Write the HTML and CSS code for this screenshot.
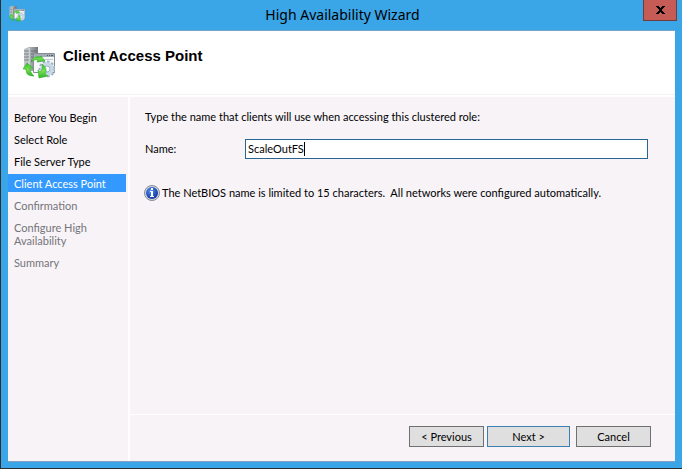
FILE: index.html
```html
<!DOCTYPE html>
<html lang="en">
<head>
<meta charset="utf-8">
<title>High Availability Wizard</title>
<link rel="stylesheet" href="styles.css">
</head>
<body>
<svg class="defs" aria-hidden="true">
  <defs>
    <linearGradient id="tower" x1="0" x2="1"><stop offset="0" stop-color="#c9cdd1"/><stop offset=".5" stop-color="#a4a9ad"/><stop offset="1" stop-color="#71777d"/></linearGradient>
    <linearGradient id="green" x1="0" y1="0" x2="0" y2="1"><stop offset="0" stop-color="#2fc42a"/><stop offset=".5" stop-color="#74e04f"/><stop offset="1" stop-color="#2eb32c"/></linearGradient>
    <radialGradient id="info" cx=".4" cy=".35" r=".7"><stop offset="0" stop-color="#5f97ea"/><stop offset=".6" stop-color="#2355c4"/><stop offset="1" stop-color="#12348f"/></radialGradient>
    <symbol id="cluster" viewBox="0 0 32 32">
      <path d="M1 2l5-2h9v24H6l-5-2z" fill="url(#tower)"/>
      <path d="M6 1v22" stroke="#eceeef"/>
      <path d="M1 4h5M1 7h5M1 10h5M1 13h5" stroke="#7c8287"/>
      <path d="M8 4h6M8 7h6M8 10h6M8 13h6" stroke="#6b7177"/>
      <path d="M10.500 6.500h21v19h-21z" fill="#f5f7f9" stroke="#858c94"/>
      <path d="M11 7h20v3H11z" fill="#a3abb4"/>
      <path d="M24 8.500h1M26 8.500h1M28 8.500h2" stroke="#4f5963"/>
      <path d="M12 12.500h18" stroke="#c5cbd1"/>
      <circle cx="24" cy="22" r="7" fill="none" stroke="#9fb3c6" stroke-width="3" stroke-dasharray="2.400 1.700"/>
      <circle cx="24" cy="22" r="5" fill="none" stroke="#c9d8e5" stroke-width="3.500"/>
      <circle cx="24" cy="22" r="3" fill="#f7fafc" stroke="#9bb0c4"/>
      <path d="M8 15c1-4 5-6 9-5l1-1 4 5-8 1 1-2c-3-1-4 0-7 2z" fill="url(#green)" stroke="#35a92e" stroke-width=".6"/>
      <path d="M0 22l4-6 6 5-3 0c0 3 1 5 4 8-6 0-8-2-8-7z" fill="url(#green)" stroke="#35a92e" stroke-width=".6"/>
      <path d="M19 17c4 3 5 6 3 10l3 2-9 2-1-8 2 2c2-2 3-4 2-8z" fill="url(#green)" stroke="#35a92e" stroke-width=".6"/>
    </symbol>
  </defs>
</svg>
<div class="window">
  <header class="titlebar">
    <svg class="app-icon" aria-hidden="true"><use href="#cluster"/></svg>
    <h1 class="title">High Availability Wizard</h1>
    <button class="close" type="button" aria-label="Close"><svg width="9" height="8" viewBox="0 0 9 8" aria-hidden="true"><path d="M0 0h3v1h1v1h1V1h1V0h3v1H8v1H7v1H6v2h1v1h1v1h1v1H6V7H5V6H4v1H3v1H0V7h1V6h1V5h1V3H2V2H1V1H0z" fill="#000"/></svg></button>
  </header>
  <div class="client">
    <div class="banner">
      <svg class="banner-icon" aria-hidden="true"><use href="#cluster"/></svg>
      <h2 class="heading">Client Access Point</h2>
    </div>
    <div class="body">
      <nav class="steps" aria-label="Steps">
        <ol>
          <li><a href="#before">Before You Begin</a></li>
          <li><a href="#role">Select Role</a></li>
          <li><a href="#type">File Server Type</a></li>
          <li class="current"><a href="#access" aria-current="step">Client Access Point</a></li>
          <li class="pending">Confirmation</li>
          <li class="pending">Configure High Availability</li>
          <li class="pending">Summary</li>
        </ol>
      </nav>
      <form class="page">
        <div class="content">
          <p class="intro">Type the name that clients will use when accessing this clustered role:</p>
          <div class="field">
            <label for="name">Name:</label>
            <div class="textbox"><input id="name" type="text" value="ScaleOutFS" maxlength="15" size="10"><span class="caret"></span></div>
          </div>
          <div class="note">
            <svg width="16" height="16" viewBox="0 0 16 16" aria-hidden="true"><circle cx="8" cy="8" r="7.500" fill="#d5d8e0" stroke="#878b96"/><circle cx="8" cy="8" r="6" fill="url(#info)"/><path d="M7 3h2v2H7zM6 6h3v5h1v1H6v-1h1V7H6z" fill="#fff"/></svg>
            <p>The NetBIOS name is limited to 15 characters.&nbsp; All networks were configured automatically.</p>
          </div>
        </div>
        <div class="actions">
          <button type="button">&lt; Previous</button>
          <button class="default" type="button">Next &gt;</button>
          <button class="cancel" type="button">Cancel</button>
        </div>
      </form>
    </div>
  </div>
</div>
</body>
</html>
```
FILE: styles.css
```css
* { box-sizing: border-box; }
body {
  margin: 0;
  color: #000;
  font: 11px/14px Lato, "Liberation Sans", sans-serif;
}
h1, h2, p, ol { margin: 0; padding: 0; }
.defs { position: absolute; width: 0; height: 0; }
.window {
  display: flex;
  flex-direction: column;
  min-height: 100vh;
  padding: 0 5px 6px 7px;
  border-left: 1px solid #2e2e30;
  border-bottom: 1px solid #2e2e30;
  background: #3aa5e7;
}
.titlebar {
  display: grid;
  grid-template-columns: 34px 1fr 34px;
  height: 30px;
}
.app-icon { width: 16px; height: 16px; margin-top: 6px; margin-left: 1px; }
.title {
  font: 14px/30px "Noto Sans", sans-serif;
  text-align: center;
}
.close {
  display: flex;
  align-items: center;
  justify-content: center;
  width: 34px;
  height: 21px;
  padding: 0;
  border: 1px solid #6f3c3e;
  border-top: 0;
  background: #c75b55;
}
.client {
  display: flex;
  flex: 1;
  flex-direction: column;
  margin-right: 2px;
  border-top: 1px solid #7ba5c8;
  border-bottom: 1px solid #8a9fbd;
  background: #fff;
}
.banner {
  display: flex;
  gap: 8px;
  height: 64px;
  padding: 16px 15px;
  border-bottom: 1px solid #f3f1f4;
}
.banner-icon { width: 32px; height: 32px; }
.heading { font: bold 15px/17px "Liberation Sans", sans-serif; }
.body {
  display: flex;
  flex: 1;
  gap: 2px;
  margin-top: 2px;
}
.steps { width: 120px; padding-top: 11px; background: #f7f3f7; }
.steps ol { list-style: none; }
.steps li {
  width: 118px;
  margin-bottom: 4px;
  padding: 3px 6px 2px;
  line-height: 13px;
}
.steps a { color: inherit; text-decoration: none; }
.steps .current { background: #3399ff; color: #fff; }
.steps .pending { color: #76737a; }
.page { display: flex; flex: 1; flex-direction: column; background: #f7f3f7; }
.content { flex: 1; padding: 13px 27px 0 15px; }
.field { display: flex; align-items: center; margin-top: 15px; }
.field label { width: 100px; }
.textbox {
  display: flex;
  flex: 1;
  align-items: center;
  height: 20px;
  padding: 0 2px;
  border: 1px solid #2a6490;
  background: #fff;
}
.textbox input {
  field-sizing: content;
  padding: 0;
  border: 0;
  outline: 0;
  background: transparent;
  font: inherit;
}
.caret { width: 1px; height: 14px; background: #000; }
.note { display: flex; align-items: center; gap: 2px; margin-top: 26px; margin-left: -1px; }
.actions {
  display: flex;
  justify-content: flex-end;
  gap: 3px;
  padding: 11px 24px 14px;
  border-top: 1px solid #fff;
}
.actions button {
  width: 75px;
  height: 21px;
  padding: 0;
  border: 1px solid #707070;
  background: #dfdfdf;
  color: #000;
  font: inherit;
}
.actions .default { width: 83px; border-color: #3c7fb1; }
.actions .cancel { margin-left: 3px; }
```
